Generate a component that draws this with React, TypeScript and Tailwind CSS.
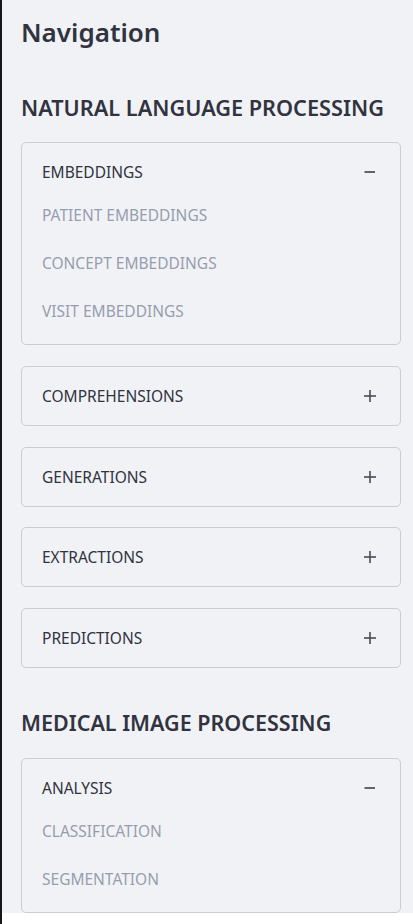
type Section = { title: string; open: boolean; items: string[]; mt: string };

function Minus() {
  return (
    <svg width="12" height="12" viewBox="0 0 12 12" className="block">
      <line x1="0.5" y1="6" x2="11" y2="6" stroke="#3d3f4a" strokeWidth="1.6" />
    </svg>
  );
}

function Plus() {
  return (
    <svg width="12" height="12" viewBox="0 0 12 12" className="block">
      <line x1="0" y1="6" x2="12" y2="6" stroke="#4a4c57" strokeWidth="1.6" />
      <line x1="6" y1="0" x2="6" y2="12" stroke="#4a4c57" strokeWidth="1.6" />
    </svg>
  );
}

function Card({ s }: { s: Section }) {
  return (
    <div className={`${s.mt} w-[380px] rounded-[5px] border border-[#cbcdd3]`}>
      <div className="flex items-center justify-between pl-[20px] pr-[24px] pt-[18px] pb-[18px]">
        <span className="text-[15.5px] leading-[22px] text-[#31333f]">{s.title}</span>
        {s.open ? <Minus /> : <Plus />}
      </div>
      {s.open && (
        <div className="mt-[2px] pb-[21px] pl-[20px] flex flex-col gap-[24px]">
          {s.items.map((it) => (
            <div key={it} className="text-[15.5px] leading-[24px] text-[#989dae]">
              {it}
            </div>
          ))}
        </div>
      )}
    </div>
  );
}

export default function App() {
  const nlp: Section[] = [
    { title: "EMBEDDINGS", open: true, items: ["PATIENT EMBEDDINGS", "CONCEPT EMBEDDINGS", "VISIT EMBEDDINGS"], mt: "mt-[19px]" },
    { title: "COMPREHENSIONS", open: false, items: [], mt: "mt-[21px]" },
    { title: "GENERATIONS", open: false, items: [], mt: "mt-[21px]" },
    { title: "EXTRACTIONS", open: false, items: [], mt: "mt-[20px]" },
    { title: "PREDICTIONS", open: false, items: [], mt: "mt-[21px]" },
  ];
  const mip: Section = { title: "ANALYSIS", open: true, items: ["CLASSIFICATION", "SEGMENTATION"], mt: "mt-[20px]" };
  return (
    <div className="flex min-h-screen bg-white" style={{ fontFamily: '"Noto Sans", sans-serif' }}>
      <div className="w-[2px] bg-[#17181b] shrink-0" />
      <div className="flex-1 self-start bg-[#f0f2f6] pl-[19px] pr-[12px]">
        <div className="pt-[14px] text-[26px] leading-[36px] font-semibold text-[#31333f]">Navigation</div>
        <div className="mt-[43px] text-[21.7px] leading-[30px] font-semibold text-[#31333f]">NATURAL LANGUAGE PROCESSING</div>
        {nlp.map((s) => (
          <Card key={s.title} s={s} />
        ))}
        <div className="mt-[40px] text-[21.5px] leading-[30px] font-semibold text-[#31333f]">MEDICAL IMAGE PROCESSING</div>
        <Card s={mip} />
      </div>
    </div>
  );
}
